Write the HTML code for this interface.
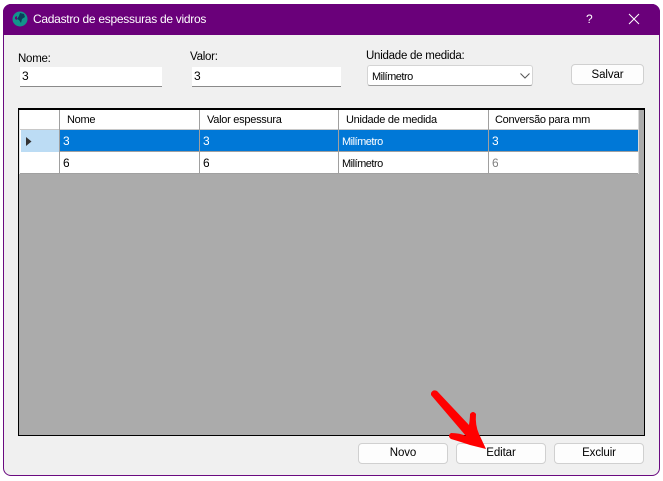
<!DOCTYPE html>
<html><head><meta charset="utf-8"><style>
html,body{margin:0;padding:0;width:663px;height:481px;overflow:hidden;background:#fff;font-family:"Liberation Sans",sans-serif;font-size:11.5px;letter-spacing:-.25px;color:#000}
div,span{position:absolute;box-sizing:border-box;white-space:nowrap}
.win{left:3px;top:4px;width:657px;height:472px;background:#f0f0f0;border:1px solid #6a0a80;border-radius:8px;overflow:hidden}
.tb{left:3px;top:4px;width:657px;height:31px;background:#6a007a;border-radius:8px 8px 0 0}
.t{line-height:14px}
.inp{background:#fff;border-bottom:1px solid #8a8a8a;height:20px;line-height:19px;padding-left:2px;font-size:12px}
.btn{background:#fdfdfd;border:1px solid #d0d0d0;border-radius:4px;text-align:center;line-height:19px;letter-spacing:-.1px}
.c{height:21px;line-height:22px;padding-left:3px;overflow:hidden;font-size:12px}
.m{font-size:11px;letter-spacing:-.5px}
.h{line-height:20px;top:110px;height:20px;font-size:11px;letter-spacing:-.27px}
.v{width:1px;background:#a0a0a0}
.hl{height:1px;background:#a0a0a0}
</style></head><body>
<div class="win"></div>
<div class="tb"></div>
<svg style="position:absolute;left:12px;top:11px" width="16" height="16" viewBox="0 0 16 16"><circle cx="8" cy="8" r="7.5" fill="#12948c"/><path d="M8 2 L12 3 L13 6 L10 8 L9 12 L7 9 L5 8 L7 5Z" fill="#0b3f5a"/><path d="M3 6 L5 5 L5 9 L3 8Z" fill="#6a007a"/></svg>
<div class="t" style="left:33px;top:12px;color:#fff;font-size:12px;letter-spacing:-.28px">Cadastro de espessuras de vidros</div>
<div class="t" style="left:586px;top:12px;color:#fff;font-size:12px">?</div>
<svg style="position:absolute;left:628px;top:13px" width="12" height="12" viewBox="0 0 12 12"><path d="M1 1L11 11M11 1L1 11" stroke="#fff" stroke-width="1" fill="none"/></svg>

<div class="t" style="left:18px;top:52px">Nome:</div>
<div class="t" style="left:190px;top:50px">Valor:</div>
<div class="t" style="left:366px;top:49px">Unidade de medida:</div>
<div class="inp" style="left:20px;top:67px;width:142px;">3</div>
<div class="inp" style="left:192px;top:67px;width:149px;">3</div>
<div class="m" style="left:367px;top:65px;width:166px;height:21px;background:#fff;border:1px solid #d4d4d4;border-bottom-color:#9a9a9a;border-radius:3px;line-height:22px;padding-left:4px">Milímetro</div>
<svg style="position:absolute;left:519px;top:72px" width="12" height="8" viewBox="0 0 12 8"><path d="M1.5 1.5L6 6L10.5 1.5" stroke="#555" stroke-width="1" fill="none"/></svg>
<div class="btn" style="left:571px;top:64px;width:73px;height:21px;line-height:20px">Salvar</div>

<div style="left:18px;top:108px;width:627px;height:328px;background:#ababab;border:1px solid #000;border-top-width:2px"></div>
<div style="left:20px;top:110px;width:619px;height:64px;background:#fff"></div>
<div style="left:21px;top:130px;width:38px;height:22px;background:#bcdcf4"></div>
<div style="left:60px;top:130px;width:579px;height:21px;background:#0078d7"></div>

<div class="h" style="left:67px">Nome</div>
<div class="h" style="left:207px">Valor espessura</div>
<div class="h" style="left:346px">Unidade de medida</div>
<div class="h" style="left:495px">Conversão para mm</div>

<div class="hl" style="left:20px;top:129px;width:619px;background:#c8c8c8"></div>
<div class="hl" style="left:60px;top:151px;width:579px"></div>
<div class="hl" style="left:20px;top:173px;width:619px;"></div>
<div class="v" style="left:59px;top:110px;height:64px"></div>
<div class="v" style="left:199px;top:110px;height:64px"></div>
<div class="v" style="left:338px;top:110px;height:64px"></div>
<div class="v" style="left:488px;top:110px;height:64px"></div>
<div class="v" style="left:19px;top:110px;height:64px;background:#e4e4e4"></div>
<div class="v" style="left:638px;top:110px;height:64px;background:#d8d8d8"></div>

<svg style="position:absolute;left:25px;top:136px" width="8" height="12" viewBox="0 0 8 12"><path d="M1 1L6.5 5.5L1 10Z" fill="#333"/></svg>

<div class="c" style="left:60px;top:130px;color:#fff">3</div>
<div class="c" style="left:200px;top:130px;color:#fff">3</div>
<div class="c m" style="left:339px;top:131px;color:#fff;line-height:22px">Milímetro</div>
<div class="c" style="left:489px;top:130px;color:#fff">3</div>
<div class="c" style="left:60px;top:152px">6</div>
<div class="c" style="left:200px;top:152px">6</div>
<div class="c m" style="left:339px;top:153px;height:20px;line-height:22px">Milímetro</div>
<div class="c" style="left:489px;top:152px;color:#808080">6</div>

<div class="btn" style="left:358px;top:443px;width:90px;height:21px">Novo</div>
<div class="btn" style="left:456px;top:443px;width:90px;height:21px">Editar</div>
<div class="btn" style="left:554px;top:443px;width:90px;height:21px">Excluir</div>

<svg style="position:absolute;left:0;top:0" width="663" height="481" viewBox="0 0 663 481">
<path d="M431 393 Q433 389 437 391 L469 425 Q470 418 470 414 Q473 410 476 414 Q475 425 479 434 L486 449 L470 445 Q458 441 451 439 Q447 436 451 433 Q460 433 466 436 L431 395Z" fill="#ff0000"/>
</svg>
</body></html>
